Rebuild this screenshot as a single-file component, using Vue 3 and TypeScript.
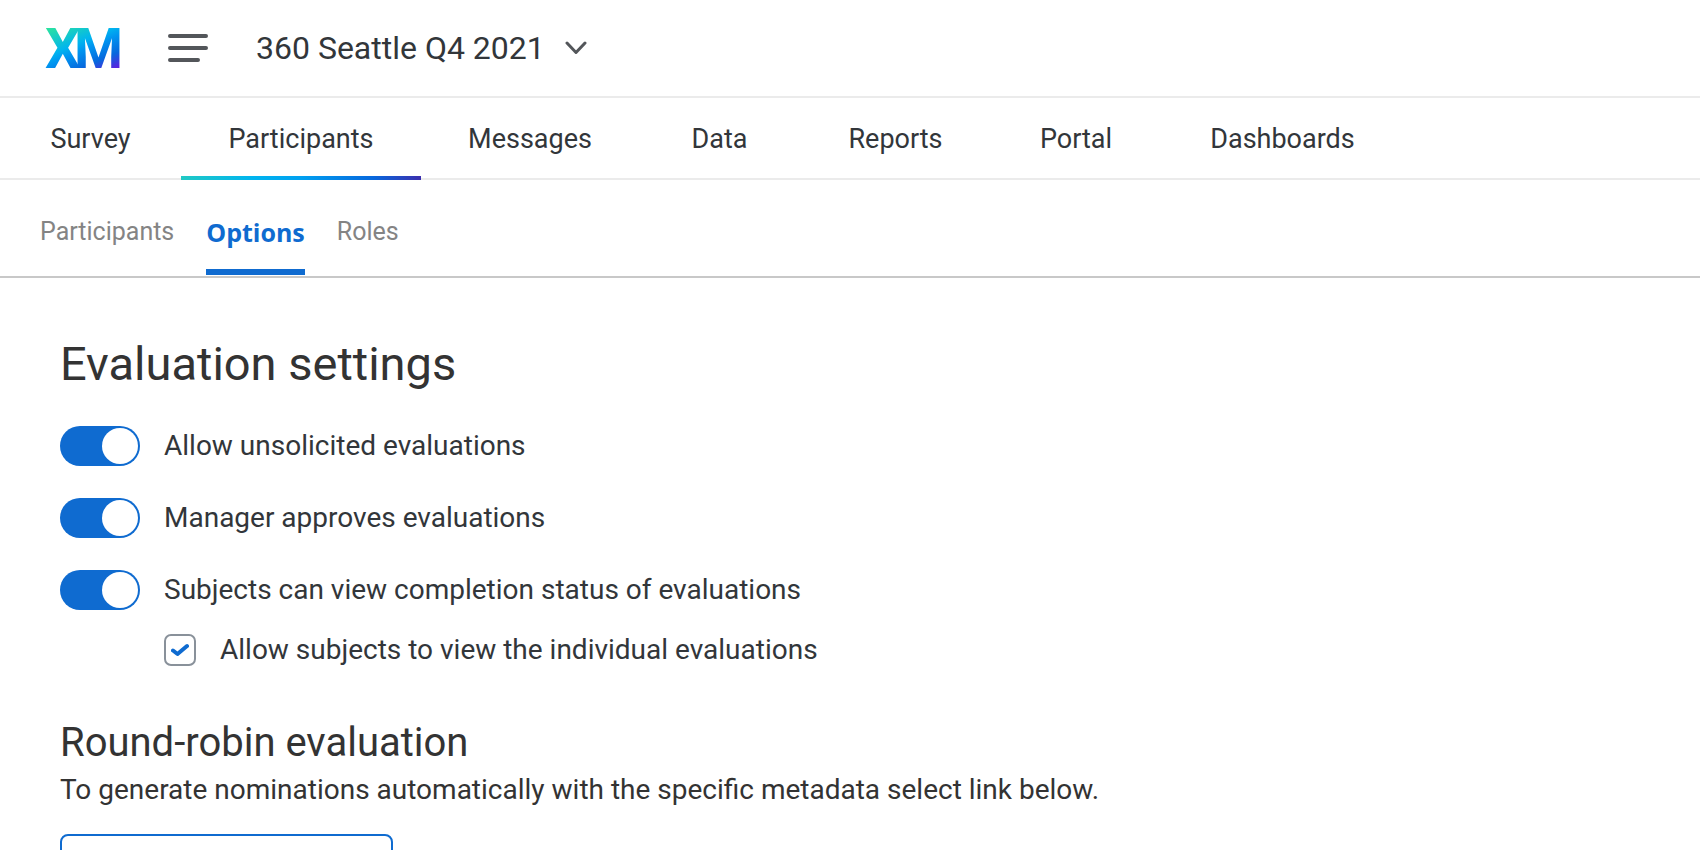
<script setup lang="ts">
import { ref } from 'vue'

interface Setting {
  id: string
  label: string
  enabled: boolean
}

const projectName = '360 Seattle Q4 2021'
const tabs: string[] = ['Survey', 'Participants', 'Messages', 'Data', 'Reports', 'Portal', 'Dashboards']
const activeTab = ref('Participants')
const views: string[] = ['Participants', 'Options', 'Roles']
const activeView = ref('Options')

const settings = ref<Setting[]>([
  { id: 'unsolicited', label: 'Allow unsolicited evaluations', enabled: true },
  { id: 'manager-approval', label: 'Manager approves evaluations', enabled: true },
  { id: 'completion-status', label: 'Subjects can view completion status of evaluations', enabled: true },
])
const viewIndividual = ref(true)
</script>

<template>
  <div class="page">
    <header class="topbar">
      <a class="logo" href="#" aria-label="XM home">
        <svg width="80" height="72" viewBox="0 -16 80 72" aria-hidden="true">
          <defs>
            <linearGradient id="logo-fill" gradientUnits="userSpaceOnUse" x1="0" y1="0" x2="28" y2="65">
              <stop offset="0" stop-color="#2ee59b" />
              <stop offset="0.38" stop-color="#00b4ef" />
              <stop offset="0.5" stop-color="#0095f0" />
              <stop offset="0.72" stop-color="#0768dd" />
              <stop offset="0.93" stop-color="#5f1ee0" />
            </linearGradient>
          </defs>
          <text class="logo-text" fill="url(#logo-fill)" x="0 29" y="40">XM</text>
        </svg>
      </a>
      <button class="menu" type="button" aria-label="Open menu">
        <svg width="40" height="28" viewBox="0 0 40 28" aria-hidden="true">
          <path d="M2 2H38M2 14H38M2 26H30" stroke="#53565a" stroke-width="4" stroke-linecap="round" />
        </svg>
      </button>
      <button class="project" type="button">
        {{ projectName }}
        <svg width="22" height="14" viewBox="0 0 22 14" aria-hidden="true">
          <path d="M2 2L11 11.5L20 2" fill="none" stroke="#53565a" stroke-width="3" stroke-linecap="round" stroke-linejoin="round" />
        </svg>
      </button>
    </header>

    <nav class="tabs" aria-label="Project sections">
      <a
        v-for="tab in tabs"
        :key="tab"
        href="#"
        class="tab"
        :class="{ active: tab === activeTab }"
        @click.prevent="activeTab = tab"
      >{{ tab }}</a>
    </nav>

    <nav class="views" aria-label="Participant views">
      <a
        v-for="view in views"
        :key="view"
        href="#"
        class="view"
        :class="{ active: view === activeView }"
        @click.prevent="activeView = view"
      >{{ view }}</a>
    </nav>

    <main class="content">
      <h1>Evaluation settings</h1>
      <div class="settings">
        <div v-for="s in settings" :key="s.id" class="setting">
          <input :id="s.id" v-model="s.enabled" class="switch" type="checkbox" role="switch" />
          <label :for="s.id">{{ s.label }}</label>
        </div>
      </div>
      <div class="setting nested">
        <span class="check">
          <input id="individual" v-model="viewIndividual" type="checkbox" />
          <svg v-if="viewIndividual" width="18" height="14" viewBox="0 0 18 14" aria-hidden="true">
            <path d="M2 7.5L6.5 11L16 3" fill="none" stroke="#0f6bd0" stroke-width="4" stroke-linecap="round" stroke-linejoin="round" />
          </svg>
        </span>
        <label for="individual">Allow subjects to view the individual evaluations</label>
      </div>

      <h2>Round-robin evaluation</h2>
      <p>To generate nominations automatically with the specific metadata select link below.</p>
      <button class="action" type="button" aria-label="Generate nominations"></button>
    </main>
  </div>
</template>

<style>
html,
body {
  height: 100%;
  margin: 0;
  overflow: hidden;
}

#app {
  height: 100%;
  overflow: hidden;
}
</style>

<style scoped>
.page {
  min-height: 100%;
  background: #fff;
  color: #32363a;
  font-family: Roboto, "Liberation Sans", sans-serif;
  font-size: 28px;
  line-height: 40px;
}

button {
  padding: 0;
  border: 0;
  background: none;
  color: inherit;
  font: inherit;
  cursor: pointer;
}

a {
  color: inherit;
  text-decoration: none;
}

svg {
  display: block;
}

.topbar {
  display: flex;
  align-items: center;
  height: 96px;
  padding: 0 45px;
  border-bottom: 2px solid #ebebeb;
}

.logo-text {
  font: bold 56px Roboto, sans-serif;
}

.menu {
  margin-left: 43px;
}

.project {
  display: flex;
  align-items: center;
  gap: 20px;
  margin-left: 48px;
  font-size: 32px;
}

.tabs {
  display: grid;
  grid-template-columns: 181px 240px 218px 161px 191px 170px 243px;
  height: 80px;
  border-bottom: 2px solid #ebebeb;
  font-size: 27px;
}

.tab {
  position: relative;
  padding: 21px 0 19px;
  text-align: center;
}

.tab.active::after {
  content: "";
  position: absolute;
  right: 0;
  bottom: -2px;
  left: 0;
  height: 4px;
  background: linear-gradient(90deg, #21c9c4, #00b4ef 30%, #00a0f0 50%, #0768dd 80%, #3b2fae);
}

.views {
  display: flex;
  gap: 32px;
  height: 96px;
  padding: 0 40px;
  border-bottom: 2px solid #c8c8c8;
  color: #848484;
  font-size: 25px;
}

.view {
  box-sizing: border-box;
  height: 95px;
  padding-top: 32px;
  border-bottom: 6px solid transparent;
}

.view.active {
  border-color: #0f6bd0;
  color: #0f6bd0;
  font-family: "Open Sans", Roboto, sans-serif;
  font-weight: bold;
}

.content {
  padding: 56px 60px;
}

h1,
h2 {
  margin: 0;
  color: #333;
  font-weight: normal;
}

h1 {
  font-size: 47px;
  line-height: 60px;
}

h2 {
  margin-top: 49px;
  font-size: 40px;
  line-height: 48px;
}

p {
  margin: 3px 0 0;
  color: #333;
}

.settings {
  display: grid;
  gap: 32px;
  margin-top: 32px;
}

.setting {
  display: flex;
  align-items: center;
  gap: 24px;
}

.nested {
  margin: 20px 0 0 104px;
}

.switch {
  appearance: none;
  display: flex;
  box-sizing: border-box;
  width: 80px;
  height: 40px;
  margin: 0;
  padding: 2px;
  border-radius: 20px;
  background: #89919a;
  cursor: pointer;
}

.switch::before {
  content: "";
  width: 36px;
  height: 36px;
  border-radius: 50%;
  background: #fff;
}

.switch:checked {
  justify-content: flex-end;
  background: #0f6bd0;
}

.check {
  display: grid;
  place-items: center;
}

.check > * {
  grid-area: 1 / 1;
}

.check input {
  appearance: none;
  box-sizing: border-box;
  width: 32px;
  height: 32px;
  margin: 0;
  border: 2px solid #89919a;
  border-radius: 7px;
  background: #fff;
  cursor: pointer;
}

.check svg {
  pointer-events: none;
}

.action {
  display: block;
  box-sizing: border-box;
  width: 333px;
  height: 64px;
  margin-top: 24px;
  border: 2px solid #0f6bd0;
  border-radius: 8px;
}
</style>
